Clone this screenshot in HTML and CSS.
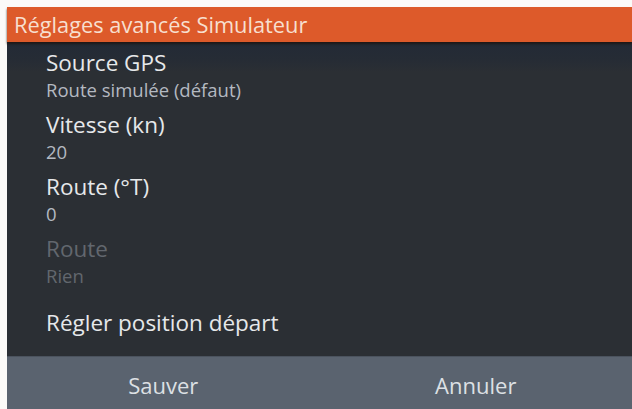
FILE: index.html
```html
<!DOCTYPE html>
<html lang="fr">
<head>
<meta charset="utf-8">
<title>Réglages avancés Simulateur</title>
<link rel="stylesheet" href="styles.css">
</head>
<body>
<div class="dialog">
  <div class="header">Réglages avancés Simulateur</div>
  <div class="list">
    <div class="item">
      <div class="title">Source GPS</div>
      <div class="sub">Route simulée (défaut)</div>
    </div>
    <div class="item">
      <div class="title">Vitesse (kn)</div>
      <div class="sub">20</div>
    </div>
    <div class="item">
      <div class="title">Route (°T)</div>
      <div class="sub">0</div>
    </div>
    <div class="item disabled">
      <div class="title">Route</div>
      <div class="sub">Rien</div>
    </div>
    <div class="item action">
      <div class="title">Régler position départ</div>
    </div>
  </div>
  <div class="footer">
    <div class="btn">Sauver</div>
    <div class="btn">Annuler</div>
  </div>
</div>
</body>
</html>
```
FILE: styles.css
```css
html, body {
  margin: 0;
  padding: 0;
  background: #fbfaf8;
  width: 632px;
  height: 409px;
  overflow: hidden;
}
body {
  padding: 7px 0 0 7px;
  box-sizing: border-box;
  font-family: "Open Sans", "Noto Sans", sans-serif;
}
.dialog {
  width: 625px;
  height: 402px;
  display: flex;
  flex-direction: column;
  background: #2b2f34;
}
.header {
  height: 35px;
  flex: none;
  background: #dd5a2a;
  color: #f7dfcf;
  font-size: 21.8px;
  line-height: 35px;
  padding-left: 7px;
  box-shadow: 0 2px 2px rgba(30, 20, 15, 0.8);
  position: relative;
  z-index: 1;
  white-space: nowrap;
}
.list {
  flex: 1;
  padding: 4px 0 0 39px;
  background: linear-gradient(#232a36 0, #262c35 18px, #2b2f34 30px);
}
.item {
  height: 62px;
  padding-top: 4px;
  box-sizing: border-box;
}
.title {
  font-size: 22.5px;
  line-height: 28px;
  margin-top: -1px;
  color: #e6e8ea;
  white-space: nowrap;
}
.sub {
  font-size: 18.5px;
  line-height: 25px;
  color: #b4b9c1;
  white-space: nowrap;
}
.disabled .title,
.disabled .sub {
  color: #62676e;
}
.action {
  padding-top: 16px;
}
.footer {
  height: 56px;
  flex: none;
  display: flex;
  background: #5a636f;
  border-top: 1px solid #4b535e;
}
.btn {
  flex: 1;
  text-align: center;
  font-size: 22px;
  line-height: 56px;
  color: #dde0e4;
}
```
